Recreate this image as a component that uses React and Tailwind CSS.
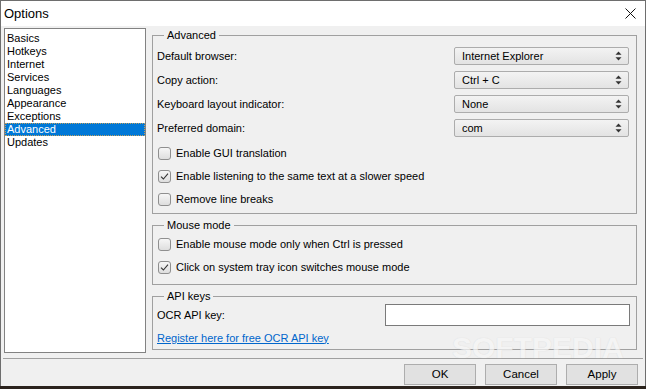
import React from 'react';

const font = { fontFamily: '"Liberation Sans", Arial, sans-serif' };

const pages = ['Basics', 'Hotkeys', 'Internet', 'Services', 'Languages', 'Appearance', 'Exceptions', 'Advanced', 'Updates'];

function Arrows() {
  return (
    <svg width="7" height="10" viewBox="0 0 7 10" className="mr-[6px]">
      <path d="M3.5 0.5 L6.5 3.8 L0.5 3.8 Z" fill="#333" />
      <path d="M3.5 9.5 L6.5 6.2 L0.5 6.2 Z" fill="#333" />
    </svg>
  );
}

function Select({ value }) {
  return (
    <div className="w-[175px] h-[18px] flex items-center justify-between rounded-[2px] border border-[#acacac] bg-gradient-to-b from-[#f3f3f3] to-[#e3e3e3] pl-[7px]">
      <span>{value}</span>
      <Arrows />
    </div>
  );
}

function Row({ label, value }) {
  return (
    <div className="h-[24px] flex items-center justify-between">
      <span>{label}</span>
      <Select value={value} />
    </div>
  );
}

function Check({ label, checked }) {
  return (
    <div className="h-[23px] flex items-center">
      <div className="ml-[1px] w-[13px] h-[13px] rounded-[3px] border border-[#8f8f8f] bg-gradient-to-b from-[#f6f6f6] to-[#dedede] flex items-center justify-center">
        {checked && (
          <svg width="9" height="9" viewBox="0 0 9 9">
            <path d="M1 4.6 L3.4 7 L8 1.6" fill="none" stroke="#333" strokeWidth="1.1" />
          </svg>
        )}
      </div>
      <span className="ml-[5px]">{label}</span>
    </div>
  );
}

function Group({ title, className, children }) {
  return (
    <fieldset className={`border border-[#a0a0a0] pl-[4px] ${className}`}>
      <legend className="ml-[7px] px-[3px] leading-[14px]">{title}</legend>
      {children}
    </fieldset>
  );
}

function Button({ children }) {
  return (
    <div className="w-[72px] h-[21px] flex items-center justify-center border border-[#adadad] bg-[#e1e1e1]">
      {children}
    </div>
  );
}

export default function App() {
  return (
    <div className="w-[646px] h-[389px] bg-[#2b231d] flex flex-col text-[11px] text-black relative overflow-hidden" style={font}>
      <div className="h-[386px] flex flex-col border-x border-t border-[#6e6e6e]">
        {/* title bar */}
        <div className="h-[25px] bg-white flex items-center justify-between pl-[3px] pr-[9px]">
          <span className="text-[13px]">Options</span>
          <svg width="11" height="11" viewBox="0 0 11 11">
            <path d="M0.5 0.5 L10.5 10.5 M10.5 0.5 L0.5 10.5" stroke="#111" strokeWidth="1" />
          </svg>
        </div>

        <div className="flex-1 bg-[#f0f0f0] flex flex-col">
          <div className="flex pt-[2px] pl-[3px]">
            {/* page list */}
            <div className="w-[142px] h-[325px] bg-white border border-[#828282] pt-[3px]">
              {pages.map((p) => (
                <div
                  key={p}
                  className={`h-[13px] leading-[13px] pl-[2px] ${p === 'Advanced' ? 'bg-[#0078d7] text-white outline outline-1 outline-dotted outline-[#c0a060] -outline-offset-1' : ''}`}
                >
                  {p}
                </div>
              ))}
            </div>

            {/* settings */}
            <div className="ml-[6px] w-[485px] flex flex-col">
              <Group title="Advanced" className="pr-[7px] pb-[2px]">
                <div className="pt-[2px]">
                  <Row label="Default browser:" value="Internet Explorer" />
                  <Row label="Copy action:" value="Ctrl + C" />
                  <Row label="Keyboard layout indicator:" value="None" />
                  <Row label="Preferred domain:" value="com" />
                </div>
                <div className="mt-[2px]">
                  <Check label="Enable GUI translation" />
                  <Check label="Enable listening to the same text at a slower speed" checked />
                  <Check label="Remove line breaks" />
                </div>
              </Group>

              <Group title="Mouse mode" className="mt-[4px] pb-[5px]">
                <div className="mt-[1px]">
                  <Check label="Enable mouse mode only when Ctrl is pressed" />
                  <Check label="Click on system tray icon switches mouse mode" checked />
                </div>
              </Group>

              <Group title="API keys" className="mt-[4px] pr-[6px] pb-[1px]">
                <div className="mt-[1px] h-[22px] flex items-center justify-between">
                  <span>OCR API key:</span>
                  <div className="w-[245px] h-[22px] bg-white border border-[#7a7a7a]" />
                </div>
                <div className="mt-[2px] h-[20px] flex items-center">
                  <span className="text-[#0066cc] underline">Register here for free OCR API key</span>
                </div>
              </Group>
            </div>
          </div>

          <div className="mt-[5px] mx-[2px] h-px bg-[#a0a0a0]" />

          <div className="mt-[5px] flex justify-end gap-[9px] pr-[7px] text-[11.5px]">
            <Button>OK</Button>
            <Button>Cancel</Button>
            <Button>Apply</Button>
          </div>
        </div>
      </div>

      {/* watermark */}
      <div className="absolute left-[452px] top-[333px] text-[30px] leading-none font-bold text-[#f7f7f7] opacity-70 pointer-events-none [text-shadow:0_0_1px_#cfcfcf]">
        SOFTPEDIA
      </div>
    </div>
  );
}
